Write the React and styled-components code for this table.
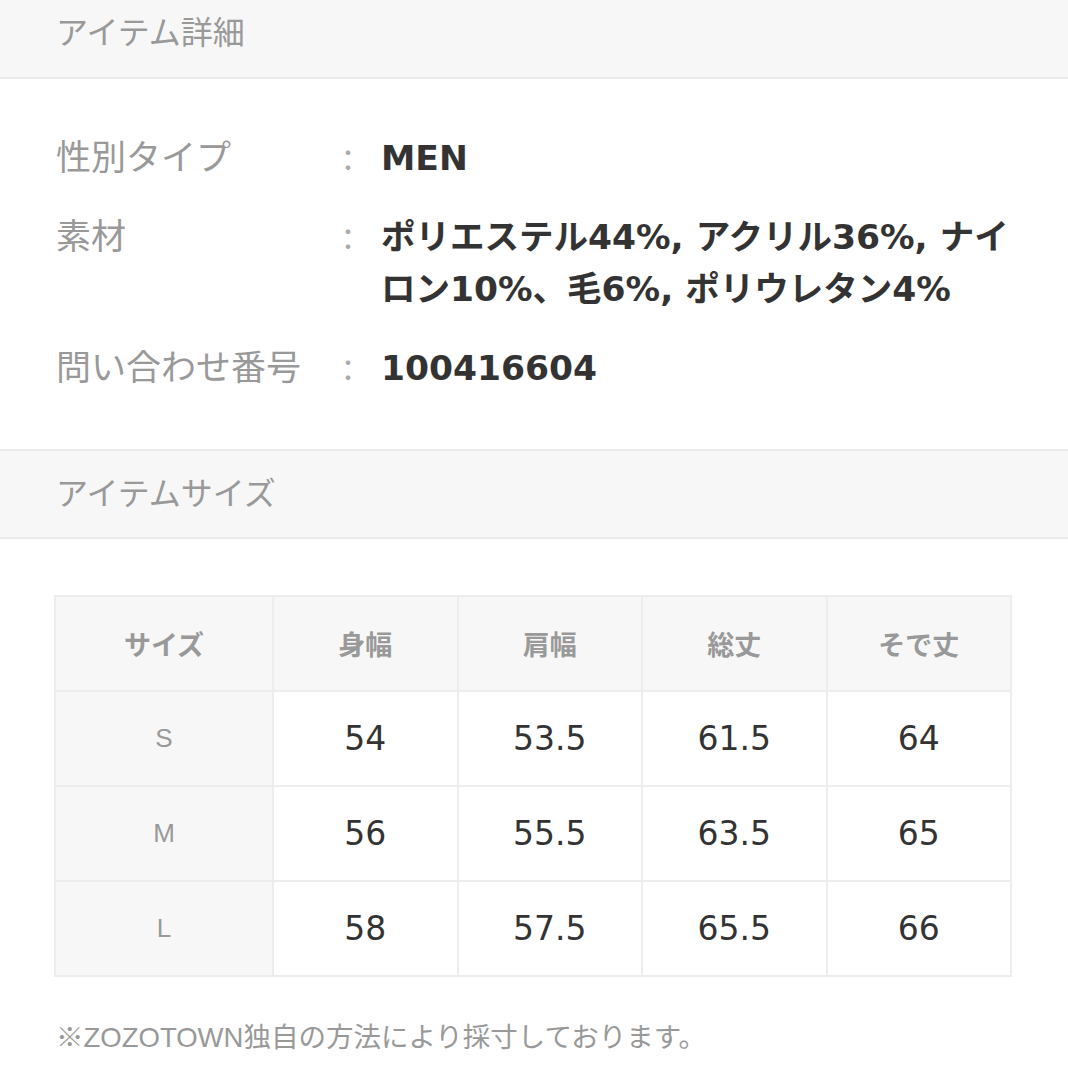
import React from 'react';
import styled, { createGlobalStyle } from 'styled-components';

const GlobalStyle = createGlobalStyle`
  html, body {
    margin: 0;
    padding: 0;
    background: #fff;
  }
  body {
    font-family: "Liberation Sans", "Noto Sans CJK JP", sans-serif;
    -webkit-font-smoothing: antialiased;
  }
`;

const Page = styled.div`
  width: 1068px;
  background: #fff;
`;

const SectionHeader = styled.div`
  background: #f7f7f7;
  border-top: ${(props) => (props.top ? '2px solid #ebebeb' : 'none')};
  border-bottom: 2px solid #ebebeb;
  height: ${(props) => props.height}px;
  padding: 0 56px;
  display: flex;
  align-items: ${(props) => (props.top ? 'center' : 'flex-start')};
  box-sizing: border-box;
`;

const HeaderTitle = styled.h2`
  margin: 0;
  padding-top: ${(props) => props.offset || 0}px;
  font-size: 32px;
  font-weight: 400;
  line-height: 40px;
  color: #999;
`;

const DetailList = styled.dl`
  margin: 0;
  padding: 53px 36px 55px 56px;
  display: grid;
  grid-template-columns: 277px 48px 1fr;
  row-gap: 27px;
  line-height: 52px;
`;

const Label = styled.dt`
  font-size: 35px;
  color: #999;
  white-space: nowrap;
`;

const Colon = styled.span`
  font-size: 30px;
  color: #aaa;
  font-family: "Noto Sans CJK JP", sans-serif;
`;

const Value = styled.dd`
  margin: 0;
  font-family: "DejaVu Sans", "Noto Sans CJK JP", sans-serif;
  font-size: 34.5px;
  font-weight: 700;
  color: #333;
`;

const TableWrap = styled.div`
  padding: 56px 56px 0 54px;
`;

const SizeTable = styled.div`
  display: grid;
  grid-template-columns: 216px repeat(4, 1fr);
  grid-auto-rows: 93px;
  gap: 2px;
  padding: 2px;
  background: #ededed;
`;

const Cell = styled.div`
  display: flex;
  align-items: center;
  justify-content: center;
  background: ${(props) => (props.shaded ? '#f7f7f7' : '#fff')};
  color: ${(props) => (props.muted ? '#999' : '#333')};
  font-family: ${(props) => (props.muted
    ? '"Liberation Sans", "Noto Sans CJK JP", sans-serif'
    : '"DejaVu Sans", "Noto Sans CJK JP", sans-serif')};
  font-size: ${(props) => (props.head ? 27 : props.muted ? 26 : 33)}px;
  font-weight: ${(props) => (props.head ? 700 : 400)};
`;

const Note = styled.p`
  margin: 43px 0 0 56px;
  padding-bottom: 24px;
  font-size: 27.5px;
  line-height: 36px;
  color: #999;
`;

const details = [
  { label: '性別タイプ', value: 'MEN' },
  { label: '素材', value: 'ポリエステル44%, アクリル36%, ナイロン10%、毛6%, ポリウレタン4%' },
  { label: '問い合わせ番号', value: '100416604' },
];

const columns = ['サイズ', '身幅', '肩幅', '総丈', 'そで丈'];

const sizes = [
  ['S', '54', '53.5', '61.5', '64'],
  ['M', '56', '55.5', '63.5', '65'],
  ['L', '58', '57.5', '65.5', '66'],
];

const App = () => (
  <Page>
    <GlobalStyle />
    <SectionHeader height={79}>
      <HeaderTitle offset={13}>アイテム詳細</HeaderTitle>
    </SectionHeader>

    <DetailList>
      {details.map((item) => (
        <React.Fragment key={item.label}>
          <Label>{item.label}</Label>
          <Colon>：</Colon>
          <Value>{item.value}</Value>
        </React.Fragment>
      ))}
    </DetailList>

    <SectionHeader top height={90}>
      <HeaderTitle>アイテムサイズ</HeaderTitle>
    </SectionHeader>

    <TableWrap>
      <SizeTable>
        {columns.map((col) => (
          <Cell key={col} head shaded muted>{col}</Cell>
        ))}
        {sizes.map((row) => row.map((v, i) => (
          <Cell key={row[0] + i} shaded={i === 0} muted={i === 0}>{v}</Cell>
        )))}
      </SizeTable>
    </TableWrap>

    <Note>※ZOZOTOWN独自の方法により採寸しております。</Note>
  </Page>
);

export default App;
